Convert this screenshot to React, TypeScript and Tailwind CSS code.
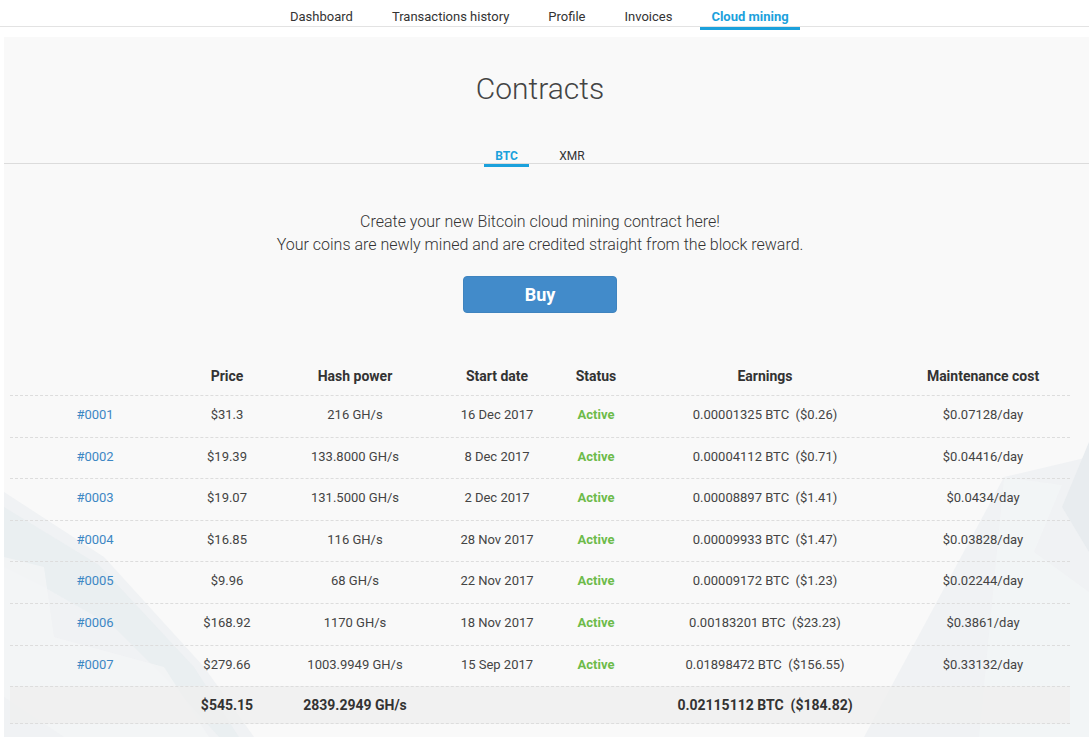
import { FC } from "react";

interface IContract {
  id: string;
  price: string;
  hash: string;
  start: string;
  earnings: string;
  cost: string;
}

const contracts: IContract[] = [
  { id: "#0001", price: "$31.3", hash: "216 GH/s", start: "16 Dec 2017", earnings: "0.00001325 BTC  ($0.26)", cost: "$0.07128/day" },
  { id: "#0002", price: "$19.39", hash: "133.8000 GH/s", start: "8 Dec 2017", earnings: "0.00004112 BTC  ($0.71)", cost: "$0.04416/day" },
  { id: "#0003", price: "$19.07", hash: "131.5000 GH/s", start: "2 Dec 2017", earnings: "0.00008897 BTC  ($1.41)", cost: "$0.0434/day" },
  { id: "#0004", price: "$16.85", hash: "116 GH/s", start: "28 Nov 2017", earnings: "0.00009933 BTC  ($1.47)", cost: "$0.03828/day" },
  { id: "#0005", price: "$9.96", hash: "68 GH/s", start: "22 Nov 2017", earnings: "0.00009172 BTC  ($1.23)", cost: "$0.02244/day" },
  { id: "#0006", price: "$168.92", hash: "1170 GH/s", start: "18 Nov 2017", earnings: "0.00183201 BTC  ($23.23)", cost: "$0.3861/day" },
  { id: "#0007", price: "$279.66", hash: "1003.9949 GH/s", start: "15 Sep 2017", earnings: "0.01898472 BTC  ($156.55)", cost: "$0.33132/day" },
];

const navItems = ["Dashboard", "Transactions history", "Profile", "Invoices", "Cloud mining"];

const cols = "grid grid-cols-[170px_94px_162px_122px_76px_262px_174px] items-center text-center";

// faint decorative shapes behind the table
const Backdrop: FC = () => (
  <svg
    className="absolute inset-0 w-full h-full pointer-events-none"
    viewBox="0 0 1085 700"
    preserveAspectRatio="none"
  >
    <polygon points="0,455 100,520 200,630 250,700 0,700" fill="#f0f2f4" />
    <polygon points="0,470 95,528 190,630 235,700 215,700 170,650 110,590 40,550 0,530" fill="#e9edf0" opacity="0.8" />
    <polygon points="40,530 50,600 160,630 205,700 60,700 0,660 0,520" fill="#f4f5f6" opacity="0.8" />
    <polygon points="1000,440 1085,420 1085,700 860,700" fill="#f0f2f4" />
    <polygon points="1085,405 1058,470 1085,515" fill="#e8ecef" />
    <polygon points="1000,440 1058,448 1030,515 1085,555 1085,700 975,700" fill="#f3f5f6" opacity="0.8" />
  </svg>
);

const App: FC = () => {
  return (
    <div className="min-h-[737px] bg-white font-['Roboto','Liberation_Sans',sans-serif] text-[#444]">
      {/* top navigation */}
      <div className="h-[27px] border-b border-[#e3e3e3] flex">
        <div className="flex gap-[17px] ml-[279px]">
          {navItems.map((item) => (
            <div
              key={item}
              className={`px-[11px] h-[30px] flex items-center text-[13px] pt-[7px] ${
                item === "Cloud mining"
                  ? "font-bold text-[#1ba1dc] border-b-[3px] border-[#1ba1dc]"
                  : "text-[#333] border-b-[3px] border-transparent"
              }`}
            >
              {item}
            </div>
          ))}
        </div>
      </div>

      <div className="ml-[4px] mt-[10px] bg-[#f9f9f9] relative overflow-hidden min-h-[700px]">
        <Backdrop />
        <div className="relative">
          <h1 className="w-[1072px] pt-[33px] h-[109px] text-center text-[30px] font-light text-[#444] leading-[38px]">
            Contracts
          </h1>

          {/* currency tabs */}
          <div className="border-b border-[#dcdcdc] h-[18px] flex">
            <div className="flex ml-[480px] gap-[23px]">
              <div className="w-[45px] text-center text-[12px] font-bold text-[#1ba1dc] border-b-[3px] border-[#1ba1dc] h-[21px] leading-[16px] pt-[2px]">
                BTC
              </div>
              <div className="w-[40px] text-center text-[12px] text-[#333] leading-[16px] pt-[2px]">
                XMR
              </div>
            </div>
          </div>

          <div className="w-[1072px] pt-[46px] text-center text-[16px] font-light text-[#333] leading-[23px]">
            <p>Create your new Bitcoin cloud mining contract here!</p>
            <p>Your coins are newly mined and are credited straight from the block reward.</p>
          </div>

          <div className="w-[1072px] flex justify-center pt-[20px]">
            <button className="w-[154px] h-[37px] rounded-[4px] bg-[#428bca] text-white font-bold text-[18px] border border-[#3f84bf]">
              Buy
            </button>
          </div>

          {/* contracts table */}
          <div className="w-[1060px] ml-[6px] mt-[44px] text-[13px]">
            <div className={`${cols} h-[38px] font-bold text-[14px] text-[#333]`}>
              <div></div>
              <div>Price</div>
              <div>Hash power</div>
              <div>Start date</div>
              <div>Status</div>
              <div>Earnings</div>
              <div>Maintenance cost</div>
            </div>
            {contracts.map((c) => (
              <div key={c.id} className={`${cols} h-[41.6px] pb-[3px] border-t border-dashed border-[#dddddd]`}>
                <div className="text-[#3d87c4]">{c.id}</div>
                <div>{c.price}</div>
                <div>{c.hash}</div>
                <div>{c.start}</div>
                <div className="font-bold text-[#6dbb4a]">Active</div>
                <div className="whitespace-pre">{c.earnings}</div>
                <div>{c.cost}</div>
              </div>
            ))}
            <div
              className={`${cols} h-[38px] border-y border-dashed border-[#dddddd] bg-[#efefef]/80 font-bold text-[14px] text-[#333]`}
            >
              <div></div>
              <div>$545.15</div>
              <div>2839.2949 GH/s</div>
              <div></div>
              <div></div>
              <div className="whitespace-pre">0.02115112 BTC  ($184.82)</div>
              <div></div>
            </div>
          </div>
        </div>
      </div>
    </div>
  );
};

export default App;
